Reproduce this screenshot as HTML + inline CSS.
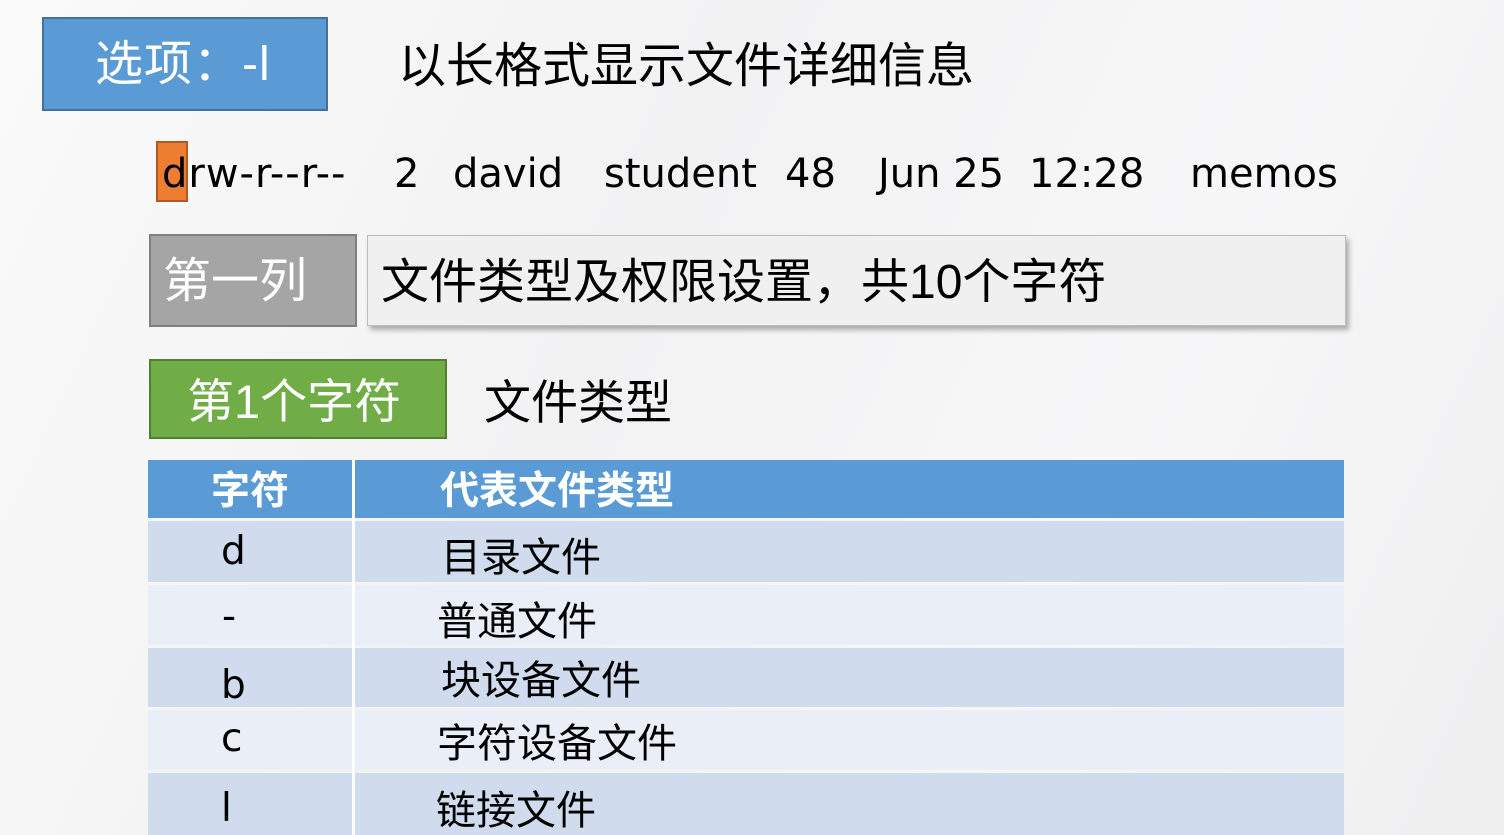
<!DOCTYPE html><html><head><meta charset="utf-8"><style>
body{margin:0;width:1504px;height:835px;overflow:hidden;background:linear-gradient(115deg,#fafafa 0%,#f2f2f3 40%,#f7f7f8 70%,#efeff0 100%);position:relative;font-family:"Liberation Sans","Noto Sans CJK SC",sans-serif;}
.a{position:absolute;white-space:nowrap;line-height:1;}
.c{font-family:"DejaVu Sans","Noto Sans CJK SC",sans-serif;}
</style></head><body>
<div class="a" style="left:42px;top:17px;width:282px;height:90px;background:#5b9bd5;border:2px solid #41719c;"></div>
<div class="a" style="left:95px;top:41px;font-size:48px;color:#fff;letter-spacing:1px;">选项：-l</div>
<div class="a" style="left:398px;top:43px;font-size:48px;color:#000;">以长格式显示文件详细信息</div>
<div class="a" style="left:156px;top:141px;width:32px;height:61px;background:#ed7d31;border:2px solid #ae5a21;box-sizing:border-box;"></div>
<div class="a c" style="left:162px;top:154px;font-size:40px;color:#000;letter-spacing:1px;">drw-r--r--</div>
<div class="a c" style="left:394px;top:154px;font-size:40px;">2</div>
<div class="a c" style="left:453px;top:154px;font-size:40px;">david</div>
<div class="a c" style="left:604px;top:154px;font-size:40px;">student</div>
<div class="a c" style="left:785px;top:154px;font-size:40px;">48</div>
<div class="a c" style="left:878px;top:154px;font-size:40px;">Jun 25</div>
<div class="a c" style="left:1029px;top:154px;font-size:40px;">12:28</div>
<div class="a c" style="left:1190px;top:154px;font-size:40px;">memos</div>
<div class="a" style="left:149px;top:234px;width:204px;height:89px;background:#a5a5a5;border:2px solid #7f7f7f;"></div>
<div class="a" style="left:163px;top:258px;font-size:48px;color:#fff;">第一列</div>
<div class="a" style="left:367px;top:235px;width:977px;height:89px;background:#f0f0f0;border:1px solid #bdbdbd;box-shadow:3px 4px 5px rgba(0,0,0,.3);"></div>
<div class="a" style="left:381px;top:259px;font-size:48px;color:#000;">文件类型及权限设置，共10个字符</div>
<div class="a" style="left:149px;top:359px;width:294px;height:76px;background:#70ad47;border:2px solid #507e32;"></div>
<div class="a" style="left:187px;top:378px;font-size:47px;color:#fff;">第1个字符</div>
<div class="a" style="left:484px;top:379px;font-size:47px;color:#000;">文件类型</div>
<div class="a" style="left:148px;top:460px;width:1196px;height:58px;background:#5b9bd5;"></div>
<div class="a" style="left:352px;top:460px;width:3px;height:373px;background:#fff;"></div>
<div class="a" style="left:211px;top:472px;font-size:39px;color:#fff;font-weight:bold;">字符</div>
<div class="a" style="left:440px;top:472px;font-size:39px;color:#fff;font-weight:bold;">代表文件类型</div>
<div class="a" style="left:148px;top:521px;width:1196px;height:61px;background:#d0dcee;"></div>
<div class="a" style="left:148px;top:585px;width:1196px;height:60px;background:#e9eef7;"></div>
<div class="a" style="left:148px;top:648px;width:1196px;height:59px;background:#d0dcee;"></div>
<div class="a" style="left:148px;top:710px;width:1196px;height:60px;background:#e9eef7;"></div>
<div class="a" style="left:148px;top:773px;width:1196px;height:62px;background:#d0dcee;"></div>
<div class="a" style="left:352px;top:521px;width:3px;height:314px;background:#fff;"></div>
<div class="a c" style="left:221px;top:532px;font-size:39px;">d</div>
<div class="a" style="left:441px;top:538px;font-size:40px;">目录文件</div>
<div class="a c" style="left:222px;top:597px;font-size:39px;">-</div>
<div class="a" style="left:437px;top:602px;font-size:40px;">普通文件</div>
<div class="a c" style="left:221px;top:666px;font-size:39px;">b</div>
<div class="a" style="left:441px;top:661px;font-size:40px;">块设备文件</div>
<div class="a c" style="left:221px;top:719px;font-size:39px;">c</div>
<div class="a" style="left:437px;top:724px;font-size:40px;">字符设备文件</div>
<div class="a c" style="left:221px;top:789px;font-size:39px;">l</div>
<div class="a" style="left:436px;top:791px;font-size:40px;">链接文件</div>
</body></html>
